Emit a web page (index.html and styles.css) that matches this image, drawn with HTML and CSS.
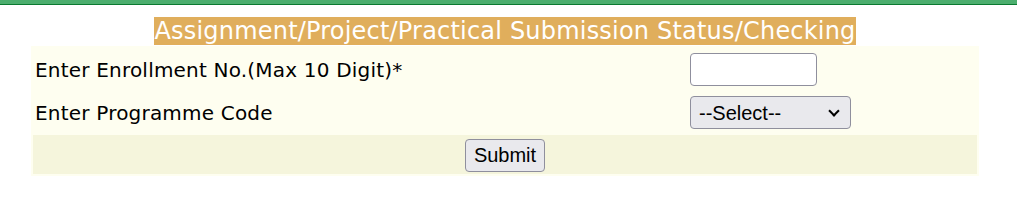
FILE: index.html
```html
<!DOCTYPE html>
<html lang="en">
<head>
    <meta charset="UTF-8">
    <title>Assignment Submission Status</title>
    <link rel="stylesheet" href="styles.css">
</head>
<body>
    <div class="topbar"></div>

    <div class="wrap">
        <h1 class="title"><span>Assignment/Project/Practical Submission Status/Checking</span></h1>

        <form class="status-form" onsubmit="return false;">
            <div class="cell label">Enter Enrollment No.(Max 10 Digit)*</div>
            <div class="cell"><input type="text" class="enrol" maxlength="10"></div>

            <div class="cell label">Enter Programme Code</div>
            <div class="cell">
                <span class="select-wrap">
                    <select class="prog">
                        <option>--Select--</option>
                    </select>
                </span>
            </div>

            <div class="cell actions"><button type="submit" class="btn">Submit</button></div>
        </form>
    </div>
</body>
</html>
```

FILE: styles.css
```css
body {
    margin: 0;
    font-family: "DejaVu Sans", Verdana, sans-serif;
    background: #fff;
    color: #000;
}
.topbar {
    height: 4px;
    background: #4cae6e;
    border-bottom: 1px solid #0a7a30;
}
.wrap {
    width: 948px;
    margin-left: 31px;
}
.title {
    margin: 12px 0 0;
    text-align: center;
    font-size: 24px;
    font-weight: normal;
    letter-spacing: 0.2px;
    line-height: 28px;
    height: 29px;
}
.title span {
    background: #e0ae5c;
    color: #fff;
}
.status-form {
    display: grid;
    grid-template-columns: 654px 1fr;
    gap: 2px;
    padding: 3px 2px 2px;
    margin: 0;
    background: #fefef0;
}
.cell {
    display: flex;
    align-items: center;
    padding: 4px 1px;
    min-height: 33px;
}
.label {
    font-size: 20px;
    letter-spacing: 0.2px;
    padding-left: 2px;
}
.actions {
    grid-column: 1 / 3;
    justify-content: center;
    background: #f5f5dc;
    padding: 4px 1px 2px;
}
.enrol,
.prog,
.btn {
    font-family: "Liberation Sans", Arial, sans-serif;
    font-size: 20px;
    height: 33px;
    box-sizing: border-box;
    border: 1px solid #8f8f9d;
    border-radius: 4px;
    margin: 0;
    color: #000;
}
.enrol {
    width: 127px;
    background: #fff;
}
.select-wrap {
    position: relative;
    display: inline-block;
}
.select-wrap::after {
    content: "";
    position: absolute;
    right: 13px;
    top: 11px;
    width: 6px;
    height: 6px;
    border-right: 2px solid #000;
    border-bottom: 2px solid #000;
    transform: rotate(45deg);
    pointer-events: none;
}
.prog {
    -webkit-appearance: none;
    appearance: none;
    width: 161px;
    background-color: #e9e9ed;
    padding: 0 30px 0 8px;
}
.btn {
    width: 80px;
    background: #e9e9ed;
    padding: 0 6px;
    cursor: pointer;
}
```
